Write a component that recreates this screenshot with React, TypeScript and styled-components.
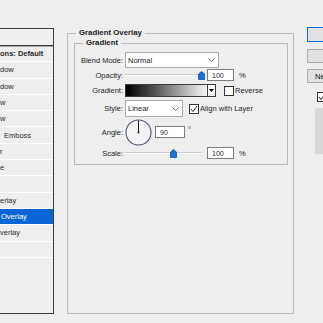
import styled, { createGlobalStyle } from "styled-components";

const GlobalStyle = createGlobalStyle`
    html, body {
        margin: 0;
        padding: 0;
    }
    body {
        width: 323px;
        height: 323px;
        overflow: hidden;
        background: #eeeeee;
        color: #1f1f1f;
        font-family: "Liberation Sans", Arial, sans-serif;
        font-size: 7.5px;
    }
`;

const Dialog = styled.div`
    display: flex;
    align-items: flex-start;
    padding-top: 27px;
    height: 323px;
    box-sizing: border-box;
`;

const StyleList = styled.div`
    width: 54px;
    height: 286px;
    margin-top: 1px;
    flex-shrink: 0;
    box-sizing: border-box;
    border-top: 1px solid #3c3c3c;
    border-right: 1px solid #3c3c3c;
    border-bottom: 1px solid #3c3c3c;
    display: flex;
    flex-direction: column;
`;

const ListHeader = styled.div`
    height: 17px;
    box-sizing: border-box;
    border-bottom: 1px solid #3c3c3c;
    box-shadow: 0 1px 0 #a8a8a8;
`;

const ListItem = styled.div<{ $indent: number; $selected?: boolean; $bold?: boolean }>`
    height: 16.3px;
    box-sizing: border-box;
    border-bottom: 1px solid #ffffff;
    display: flex;
    align-items: center;
    padding-left: ${(p) => p.$indent}px;
    white-space: nowrap;
    overflow: hidden;
    font-size: 7.5px;
    font-weight: ${(p) => (p.$bold ? 700 : 400)};
    background: ${(p) => (p.$selected ? "#0a66d6" : "transparent")};
    color: ${(p) => (p.$selected ? "#ffffff" : "#2a2a2a")};
`;

const Group = styled.fieldset<{ $outer?: boolean }>`
    margin: ${(p) => (p.$outer ? "1px 0 0 13px" : "0 5px 0 6px")};
    padding: 0;
    min-width: 0;
    box-sizing: border-box;
    border: 1px solid #bcbcbc;
    width: ${(p) => (p.$outer ? "227px" : "auto")};
    height: ${(p) => (p.$outer ? "286px" : "auto")};
    flex-shrink: 0;
`;

const Legend = styled.legend`
    margin-left: 8px;
    padding: 0 3px;
    line-height: 10px;
    font-weight: 700;
    font-size: 7.8px;
    color: #1a1a1a;
`;

const Form = styled.div`
    display: grid;
    grid-template-columns: 48px 1fr;
    grid-template-rows: 16px 14px 17px 19px 28px 14px;
    column-gap: 2px;
    padding: 4px 0 4px 0;
`;

const Label = styled.div`
    text-align: right;
    align-self: center;
    white-space: nowrap;
`;

const Controls = styled.div`
    display: flex;
    align-items: center;
    white-space: nowrap;
`;

const Select = styled.div<{ $width: number; $height: number }>`
    width: ${(p) => p.$width}px;
    height: ${(p) => p.$height}px;
    box-sizing: border-box;
    border: 1px solid #a9a9a9;
    background: #ffffff;
    display: flex;
    align-items: center;
    justify-content: space-between;
    padding: 0 3px 0 2px;
`;

const SliderTrack = styled.div`
    position: relative;
    width: 77px;
    height: 12px;
    display: flex;
    align-items: center;
`;

const SliderLine = styled.div`
    width: 100%;
    height: 0;
    border-top: 1px solid #cdcdcd;
    border-bottom: 1px solid #fbfbfb;
`;

const Thumb = styled.svg<{ $at: number }>`
    position: absolute;
    left: ${(p) => p.$at - 3.5}px;
    top: 2px;
`;

const NumberBox = styled.div<{ $width: number; $ml: number }>`
    width: ${(p) => p.$width}px;
    height: 12px;
    margin-left: ${(p) => p.$ml}px;
    box-sizing: border-box;
    border: 1px solid #7c7c7c;
    background: #ffffff;
    display: flex;
    align-items: center;
    padding-left: 4px;
    font-size: 7px;
`;

const Unit = styled.span<{ $ml: number; $raise?: boolean }>`
    margin-left: ${(p) => p.$ml}px;
    position: relative;
    top: ${(p) => (p.$raise ? -3 : 0)}px;
`;

const GradientSwatch = styled.div`
    display: flex;
    height: 13px;
    box-sizing: border-box;
    border: 1px solid #3a3a3a;
`;

const GradientBar = styled.div`
    width: 81px;
    background: linear-gradient(to right, #000000 0%, #444444 30%, #c8c8c8 80%, #f4f4f4 100%);
`;

const SwatchArrow = styled.div`
    width: 7px;
    background: #ffffff;
    border-left: 1px solid #3a3a3a;
    display: flex;
    align-items: center;
    justify-content: center;
`;

const CheckBox = styled.div<{ $ml: number }>`
    width: 10px;
    height: 10px;
    margin-left: ${(p) => p.$ml}px;
    margin-right: 1px;
    box-sizing: border-box;
    border: 1px solid #333333;
    background: #ffffff;
    display: flex;
    align-items: center;
    justify-content: center;
    flex-shrink: 0;
`;

const SideColumn = styled.div`
    margin-left: 13px;
    width: 74px;
    display: flex;
    flex-direction: column;
    flex-shrink: 0;
`;

const DialogButton = styled.div<{ $primary?: boolean; $mt: number; $height: number; $textStart?: boolean }>`
    height: ${(p) => p.$height}px;
    margin-top: ${(p) => p.$mt}px;
    box-sizing: border-box;
    border: 1px solid ${(p) => (p.$primary ? "#0a6fd6" : "#adadad")};
    background: #e1e1e1;
    display: flex;
    align-items: center;
    justify-content: ${(p) => (p.$textStart ? "flex-start" : "center")};
    padding-left: ${(p) => (p.$textStart ? 7 : 0)}px;
    white-space: nowrap;
    color: #111111;
`;

const PreviewRow = styled.div`
    margin-top: 9px;
    padding-left: 10px;
    display: flex;
    align-items: center;
`;

const PreviewBox = styled.div`
    margin-top: 6px;
    margin-left: 8px;
    height: 46px;
    background: #d8d8d8;
`;

const Chevron = () => (
    <svg width="7" height="4" viewBox="0 0 7 4">
        <polyline points="0.5,0.5 3.5,3.5 6.5,0.5" fill="none" stroke="#6a6a6a" strokeWidth="1" />
    </svg>
);

const Check = () => (
    <svg width="8" height="8" viewBox="0 0 8 8">
        <polyline points="1,4 3,6.5 7,1" fill="none" stroke="#222222" strokeWidth="1" />
    </svg>
);

const BlueThumb = ({ at }: { at: number }) => (
    <Thumb $at={at} width="7" height="9" viewBox="0 0 7 9">
        <path d="M0.5 3 L3.5 0.5 L6.5 3 L6.5 8.5 L0.5 8.5 Z" fill="#1a6fd4" stroke="#0c58b3" strokeWidth="0.8" />
    </Thumb>
);

const AngleDial = () => (
    <svg width="27" height="27" viewBox="0 0 27 27">
        <circle cx="13.5" cy="13.5" r="12.5" fill="#f3f3f5" stroke="#4b5670" strokeWidth="1.1" />
        <line x1="13.5" y1="13.5" x2="13.5" y2="1.5" stroke="#111111" strokeWidth="1" />
        <circle cx="13.5" cy="13.5" r="0.9" fill="#111111" />
    </svg>
);

const styleItems = [
    { label: "ons: Default", indent: 0, bold: true },
    { label: "dow", indent: 0 },
    { label: "dow", indent: 0 },
    { label: "w", indent: -1 },
    { label: "w", indent: -3 },
    { label: "Emboss", indent: 4 },
    { label: "r", indent: 0 },
    { label: "e", indent: -2 },
    { label: "", indent: 0 },
    { label: "erlay", indent: -3 },
    { label: "Overlay", indent: 1, selected: true },
    { label: "verlay", indent: -1 },
    { label: "", indent: 0 },
];

const App = () => {
    return (
        <>
            <GlobalStyle />
            <Dialog>
                <StyleList>
                    <ListHeader />
                    {styleItems.map((item, i) => (
                        <ListItem key={i} $indent={item.indent} $selected={item.selected} $bold={item.bold}>
                            {item.label}
                        </ListItem>
                    ))}
                </StyleList>

                <Group $outer>
                    <Legend>Gradient Overlay</Legend>
                    <Group>
                        <Legend>Gradient</Legend>
                        <Form>
                            <Label>Blend Mode:</Label>
                            <Controls>
                                <Select $width={94} $height={16}>
                                    <span>Normal</span>
                                    <Chevron />
                                </Select>
                            </Controls>

                            <Label>Opacity:</Label>
                            <Controls>
                                <SliderTrack>
                                    <SliderLine />
                                    <BlueThumb at={76} />
                                </SliderTrack>
                                <NumberBox $width={27} $ml={5}>100</NumberBox>
                                <Unit $ml={5}>%</Unit>
                            </Controls>

                            <Label>Gradient:</Label>
                            <Controls>
                                <GradientSwatch>
                                    <GradientBar />
                                    <SwatchArrow>
                                        <svg width="5" height="3" viewBox="0 0 5 3">
                                            <path d="M0 0 L5 0 L2.5 3 Z" fill="#000000" />
                                        </svg>
                                    </SwatchArrow>
                                </GradientSwatch>
                                <CheckBox $ml={8} />
                                <span>Reverse</span>
                            </Controls>

                            <Label>Style:</Label>
                            <Controls>
                                <Select $width={58} $height={17}>
                                    <span>Linear</span>
                                    <Chevron />
                                </Select>
                                <CheckBox $ml={6}>
                                    <Check />
                                </CheckBox>
                                <span>Align with Layer</span>
                            </Controls>

                            <Label>Angle:</Label>
                            <Controls>
                                <AngleDial />
                                <NumberBox $width={30} $ml={3}>90</NumberBox>
                                <Unit $ml={3} $raise>°</Unit>
                            </Controls>

                            <Label>Scale:</Label>
                            <Controls>
                                <SliderTrack>
                                    <SliderLine />
                                    <BlueThumb at={48} />
                                </SliderTrack>
                                <NumberBox $width={27} $ml={5}>100</NumberBox>
                                <Unit $ml={5}>%</Unit>
                            </Controls>
                        </Form>
                    </Group>
                </Group>

                <SideColumn>
                    <DialogButton $primary $mt={0} $height={15}>OK</DialogButton>
                    <DialogButton $mt={7} $height={14}>Cancel</DialogButton>
                    <DialogButton $mt={6} $height={14} $textStart>New Style...</DialogButton>
                    <PreviewRow>
                        <CheckBox $ml={0}>
                            <Check />
                        </CheckBox>
                        <span>Preview</span>
                    </PreviewRow>
                    <PreviewBox />
                </SideColumn>
            </Dialog>
        </>
    );
};

export default App;
